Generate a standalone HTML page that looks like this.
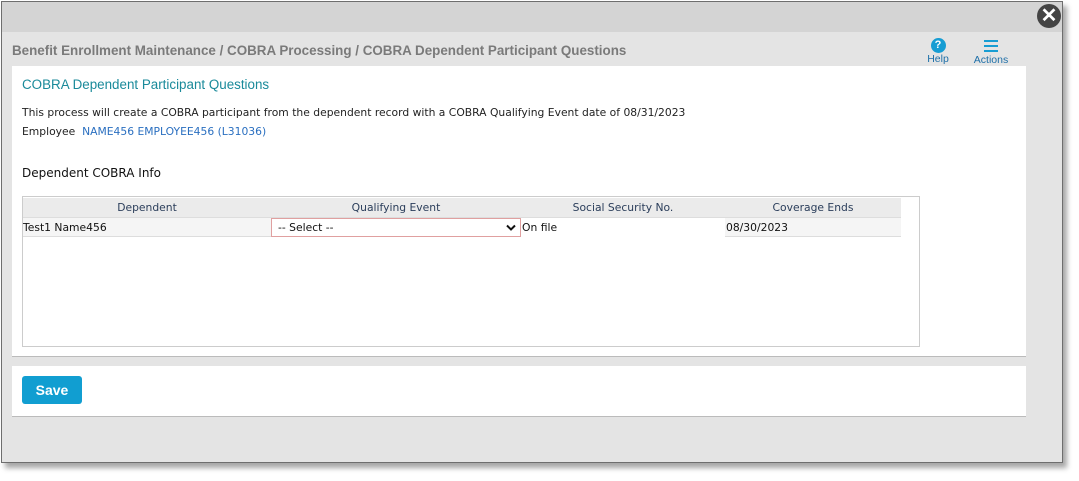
<!DOCTYPE html>
<html><head><style>
*{margin:0;padding:0;box-sizing:border-box}
body{width:1079px;height:481px;background:#fff;position:relative;overflow:hidden;font-family:"DejaVu Sans","Liberation Sans",sans-serif}
.win{position:absolute;left:1px;top:1px;width:1062px;height:462px;border:1px solid #6e6e6e;background:#e4e4e4;box-shadow:4px 5px 5px rgba(0,0,0,.35)}
.tbar{position:absolute;left:0;top:0;right:0;height:30px;background:#d4d4d4}
.close{position:absolute;left:1035px;top:2px;width:24px;height:24px;border-radius:50%;background:#444;color:#fff;font:bold 20px/24px "Liberation Sans",sans-serif;text-align:center}
.crumb{position:absolute;left:10px;top:41px;font:bold 13.4px "Liberation Sans",sans-serif;color:#7a7a7a}
.ico{position:absolute;text-align:center;font:10.5px "Liberation Sans",sans-serif;color:#1e6fa8}
.panel{position:absolute;left:10px;top:64px;width:1014px;height:291px;background:#fff;border-bottom:1px solid #bbb}
.h{position:absolute;left:10px;top:11px;font:13.4px "Liberation Sans",sans-serif;color:#1a8a9a}
.t{position:absolute;left:10px;font-size:10.75px;color:#222}
.lnk{color:#2a6fc0}
.box{position:absolute;left:10px;top:130px;width:898px;height:151px;border:1px solid #ccc}
.row{position:absolute;left:0;height:19px;font-size:10.75px;line-height:19px}
.c{position:absolute;top:0;height:19px}
.save{position:absolute;left:10px;top:364px;width:1014px;height:51px;background:#fff;border-bottom:1px solid #bbb}
.btn{position:absolute;left:10px;top:10px;width:60px;height:28px;background:#119ed1;border-radius:3px;color:#fff;font:bold 14px/28px "Liberation Sans",sans-serif;text-align:center}
</style></head><body>
<div class="win">
<div class="tbar"></div>
<div class="close">✕</div>
<div class="crumb">Benefit Enrollment Maintenance / COBRA Processing / COBRA Dependent Participant Questions</div>
<div class="ico" style="left:923px;top:36px;width:26px"><div style="width:15px;height:15px;border-radius:50%;background:#179dd3;color:#fff;font:bold 11px/15px 'Liberation Sans';margin:0 auto">?</div>Help</div>
<div class="ico" style="left:969px;top:37px;width:40px"><svg width="14" height="13" viewBox="0 0 14 13"><rect y="1" width="14" height="2" fill="#179dd3"/><rect y="6" width="14" height="2" fill="#179dd3"/><rect y="11" width="14" height="2" fill="#179dd3"/></svg><div style="margin-top:-1px">Actions</div></div>
<div class="panel">
<div class="h">COBRA Dependent Participant Questions</div>
<div class="t" style="top:40px">This process will create a COBRA participant from the dependent record with a COBRA Qualifying Event date of 08/31/2023</div>
<div class="t" style="top:59px">Employee &nbsp;<span class="lnk">NAME456 EMPLOYEE456 (L31036)</span></div>
<div class="t" style="top:100px;font-size:12px;color:#111">Dependent COBRA Info</div>
<div class="box">
<div class="row" style="top:1px;width:878px;background:#ebebeb;color:#2a3d5a">
<div class="c" style="left:0;width:248px;text-align:center">Dependent</div>
<div class="c" style="left:248px;width:250px;text-align:center">Qualifying Event</div>
<div class="c" style="left:498px;width:204px;text-align:center">Social Security No.</div>
<div class="c" style="left:702px;width:176px;text-align:center">Coverage Ends</div>
</div>
<div class="row" style="top:20px;width:878px;background:#f5f5f5;border-top:1px solid #ddd;border-bottom:1px solid #ddd;height:20px;color:#111">
<div class="c" style="left:0">Test1 Name456</div>
<div class="c" style="left:248px;width:250px;border:1px solid #e0a0a0;background:#fff;padding-left:6px;line-height:17px">-- Select --<svg style="position:absolute;right:4px;top:5px" width="10" height="7" viewBox="0 0 10 7"><path d="M1 1.5L5 5.5L9 1.5" stroke="#111" stroke-width="2" fill="none"/></svg></div>
<div class="c" style="left:498px;width:204px;background:#fff;padding-left:1px">On file</div>
<div class="c" style="left:702px;padding-left:1px">08/30/2023</div>
</div>
</div>
</div>
<div class="save"><div class="btn">Save</div></div>
</div>
</body></html>
